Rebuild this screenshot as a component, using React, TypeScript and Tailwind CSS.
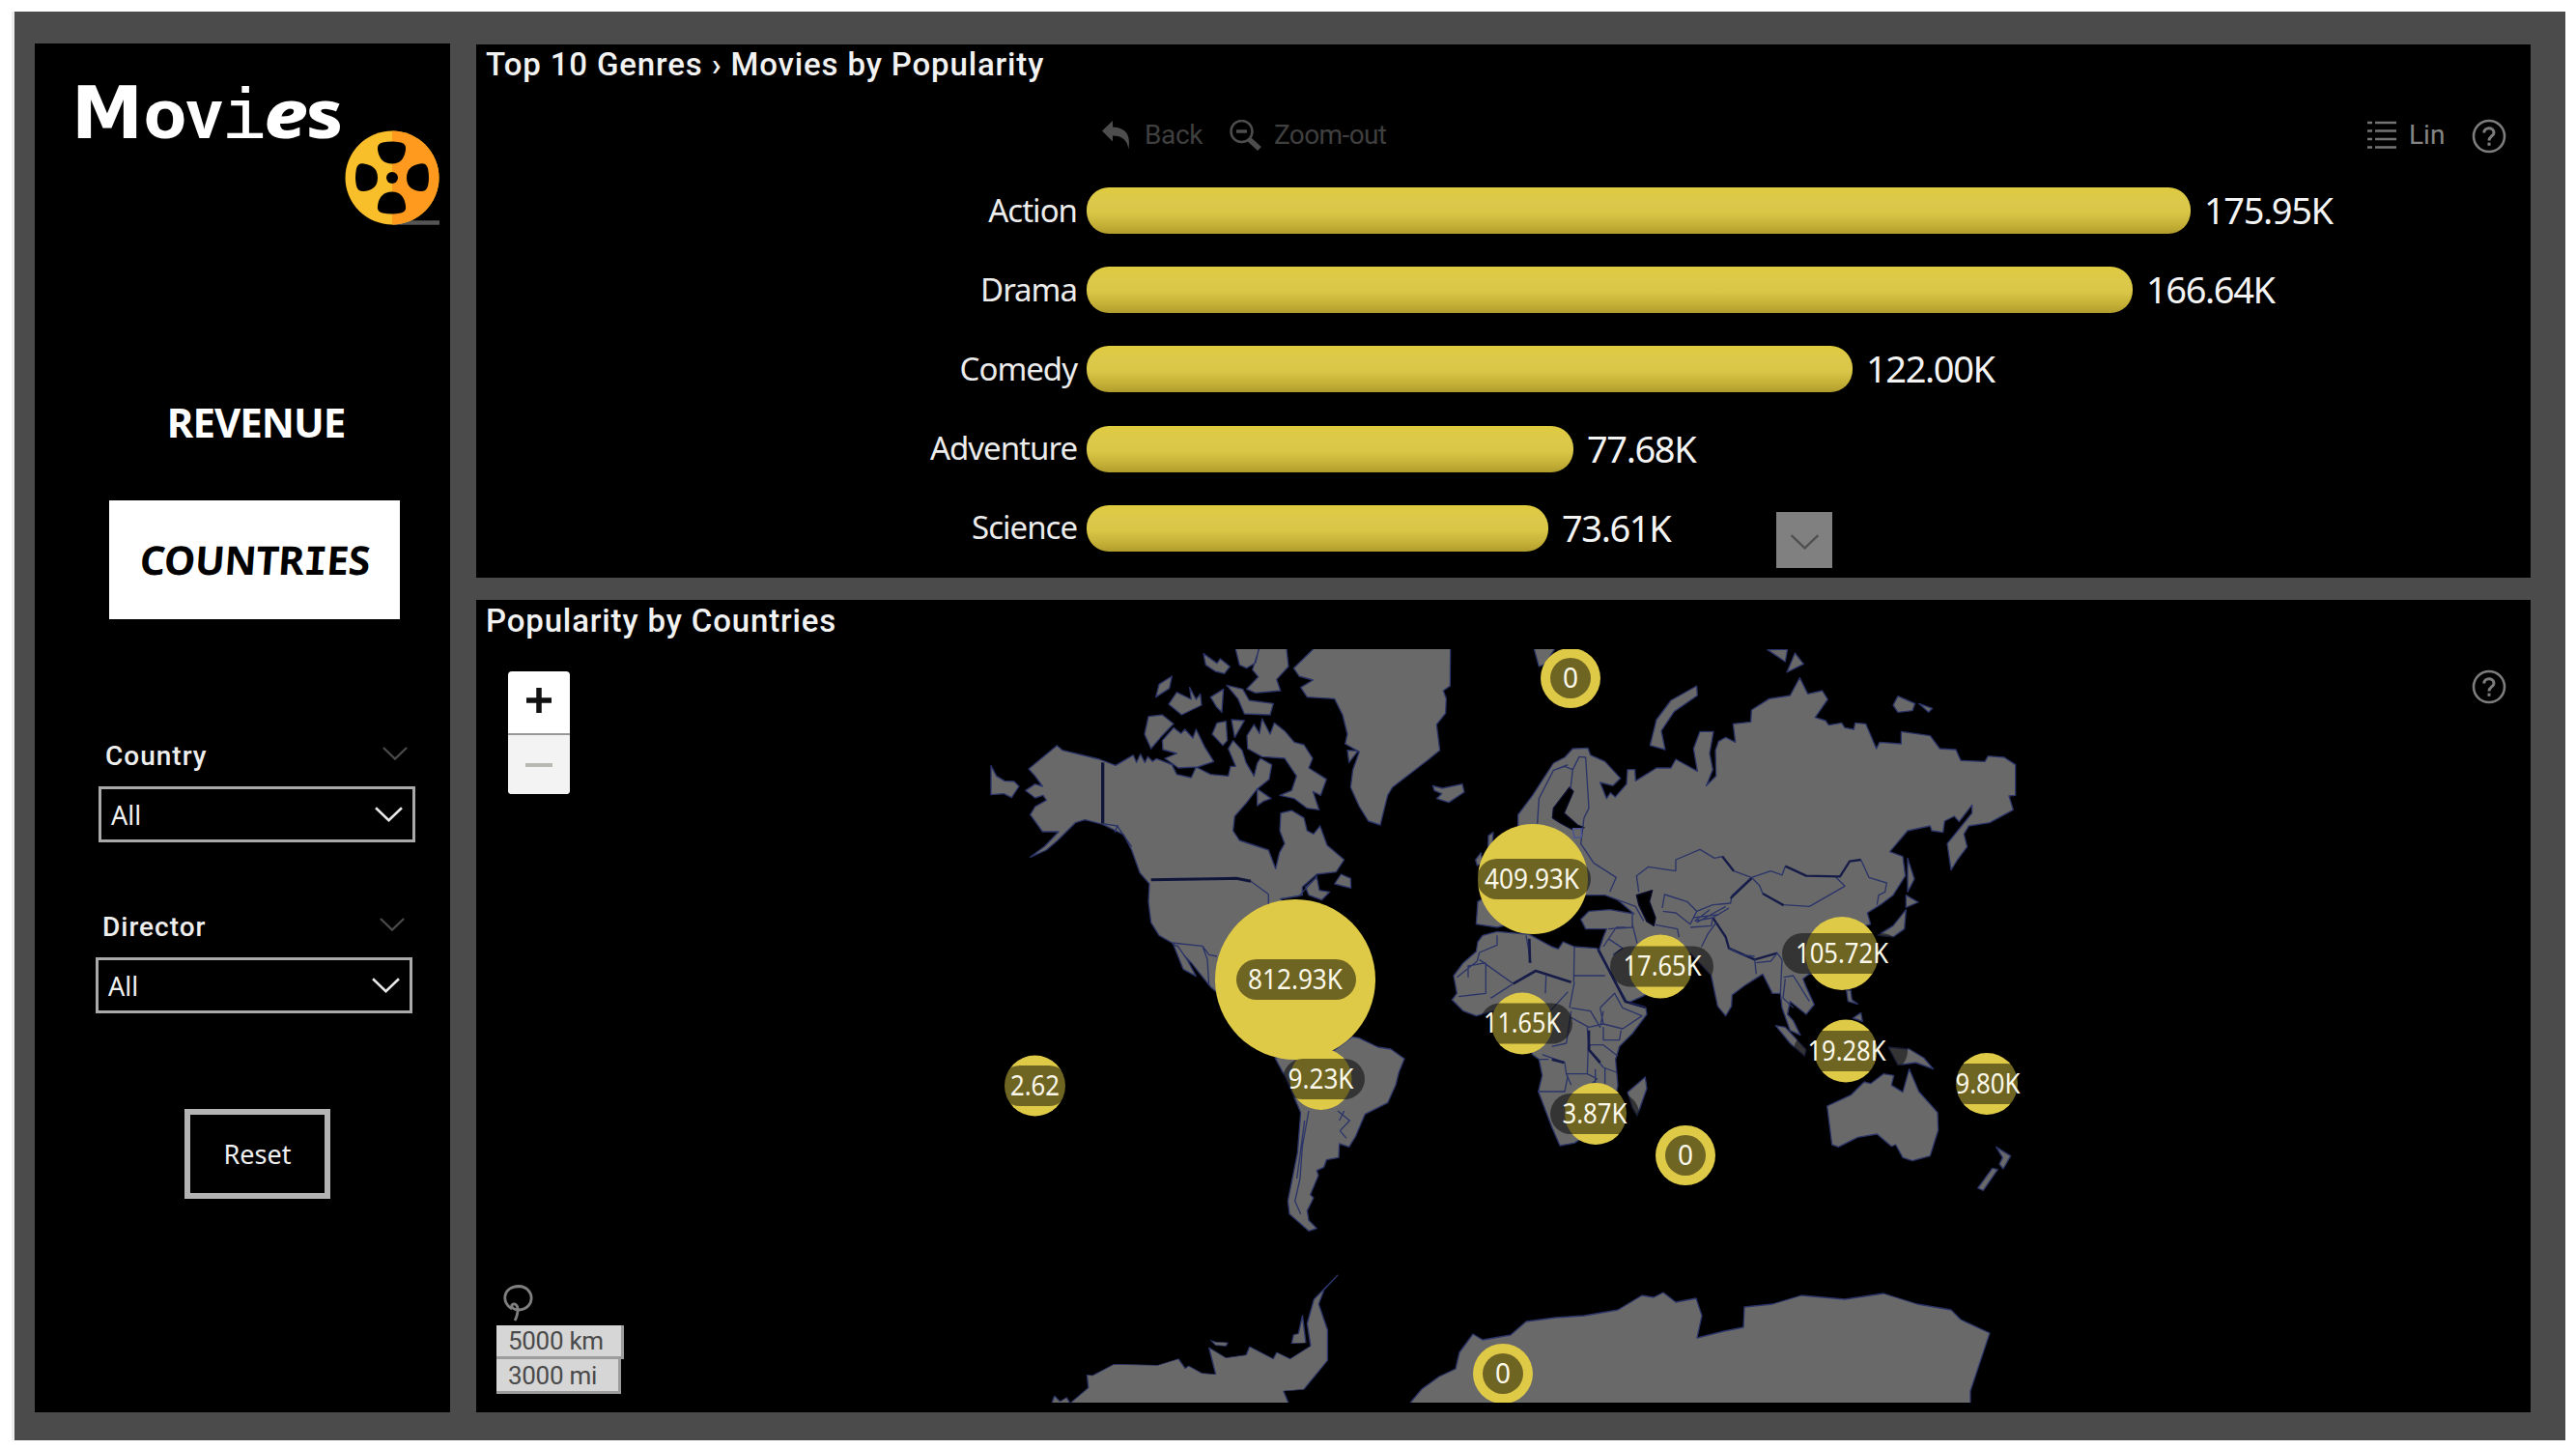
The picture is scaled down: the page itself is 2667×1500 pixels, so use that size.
import React from "react";

const DIN = "font-['Roboto','Liberation_Sans',sans-serif]";
const SEGOE = "font-['Noto_Sans','Open_Sans',sans-serif]";

const LAND = "#696969";
const EDGE = "#2b3468";

function Chevron({ className, width = 2.5 }: { className: string; width?: number }) {
  return (
    <svg viewBox="0 0 28 15" className={className} fill="none" stroke="currentColor" strokeWidth={width}>
      <path d="M1 1 L14 13.5 L27 1" />
    </svg>
  );
}

function HelpIcon() {
  return (
    <svg viewBox="0 0 36 36" className="block h-9 w-9" fill="none" stroke="#7d7d7d" strokeWidth="2.6">
      <circle cx="18" cy="18" r="16" />
      <path d="M12.8 14.5 C12.8 8.3 23 8.3 23 14.2 C23 18 18 18 18 22.6" strokeWidth="3" />
      <path d="M18 24.6 V27.8" strokeWidth="3" />
    </svg>
  );
}

function Reel() {
  return (
    <svg viewBox="0 0 100 98" className="block h-[98px] w-[100px]">
      <path d="M50 95.5 H99" stroke="#555" strokeWidth="4.5" />
      <circle cx="50" cy="49" r="48.5" fill="#f9bf2b" />
      <path d="M50 .5 A48.5 48.5 0 0 1 50 97.5Z" fill="#ff9a1e" />
      <g fill="#000">
        <path d="M35 20 Q34 14 40 12.500 Q50 10.500 59 12.500 Q65 14 64 20 Q62 34.500 50 34.500 Q37 34.500 35 20Z" />
        <path d="M35 78 Q34 84 40 85.500 Q50 87.500 59 85.500 Q65 84 64 78 Q62 63.500 50 63.500 Q37 63.500 35 78Z" />
        <path d="M21 34.500 Q14.500 33.500 13 39.500 Q11 49 13 57.500 Q14.500 63.500 21 63 Q35 61.500 35 49 Q35 36.500 21 34.500Z" />
        <path d="M79 34.500 Q85.500 33.500 87 39.500 Q89 49 87 57.500 Q85.500 63.500 79 63 Q65 61.500 65 49 Q65 36.500 79 34.500Z" />
        <circle cx="50" cy="49" r="6" />
      </g>
    </svg>
  );
}

function Logo() {
  return (
    <svg viewBox="0 0 300 120" className="block h-[120px] w-[300px]" fill="#fff">
      <text x="-5" y="98" fontFamily="DejaVu Sans" fontWeight="700" fontSize="75" textLength="74" lengthAdjust="spacingAndGlyphs">M</text>
      <text x="69" y="98" fontFamily="Noto Sans" fontWeight="700" fontSize="70" textLength="46" lengthAdjust="spacingAndGlyphs">o</text>
      <text x="114" y="98" fontFamily="Noto Sans" fontWeight="700" fontSize="70" textLength="37" lengthAdjust="spacingAndGlyphs">v</text>
      <text x="151" y="98" fontFamily="Liberation Mono" fontSize="74" textLength="46" lengthAdjust="spacingAndGlyphs">i</text>
      <text x="194" y="98" fontFamily="Noto Sans" fontWeight="800" fontStyle="italic" fontSize="70" textLength="46" lengthAdjust="spacingAndGlyphs">e</text>
      <text x="238" y="98" fontFamily="Noto Sans" fontWeight="800" fontSize="70" textLength="38" lengthAdjust="spacingAndGlyphs">s</text>
    </svg>
  );
}

function Slicer({ label, indent }: { label: string; indent: string }) {
  return (
    <div className={indent}>
      <div className={`flex h-6 w-[328px] items-center justify-between pl-[7px] pr-[8px] text-[28px] font-medium leading-none tracking-[1px] text-[#eee] ${DIN}`}>
        <span>{label}</span>
        <Chevron className="-mt-1.5 block h-[14px] w-[26px] text-[#4a4a4a]" />
      </div>
      <div className="mt-[19px] flex h-[58px] w-[328px] items-center justify-between border-[3px] border-[#a9a9a9] pl-[10px] pr-[10px]">
        <span className={`text-[27px] leading-none text-[#f0f0f0] ${SEGOE}`}>All</span>
        <Chevron className="block h-[16px] w-[29px] text-[#e8e8e8]" />
      </div>
    </div>
  );
}

const BARS = [
  { name: "Action", value: "175.95K", width: 1143 },
  { name: "Drama", value: "166.64K", width: 1083 },
  { name: "Comedy", value: "122.00K", width: 793 },
  { name: "Adventure", value: "77.68K", width: 504 },
  { name: "Science", value: "73.61K", width: 478 },
];

const BUBBLES = [
  { x: 1626, y: 702, r: 31, label: "0", px: 1605, pw: 42 },
  { x: 1341, y: 1014, r: 83, label: "812.93K", px: 1280, pw: 124 },
  { x: 1367.500, y: 1117, r: 32, label: "9.23K", px: 1328, pw: 85 },
  { x: 1587, y: 910, r: 57, label: "409.93K", px: 1529, pw: 118, tx: 1586 },
  { x: 1576, y: 1059.500, r: 32, label: "11.65K", px: 1532, pw: 96 },
  { x: 1719, y: 1000.500, r: 33, label: "17.65K", px: 1667, pw: 107, tx: 1721 },
  { x: 1652, y: 1153, r: 32, label: "3.87K", px: 1605, pw: 92, tx: 1651 },
  { x: 1745, y: 1196, r: 31, label: "0", px: 1724, pw: 42 },
  { x: 1556, y: 1422, r: 31, label: "0", px: 1535, pw: 42 },
  { x: 1907, y: 987, r: 38, label: "105.72K", px: 1845, pw: 124 },
  { x: 1911, y: 1088, r: 32.500, label: "19.28K", px: 1857, pw: 118, tx: 1912 },
  { x: 2057, y: 1122, r: 32, label: "9.80K", px: 2015, pw: 84, tx: 2058 },
  { x: 1071.500, y: 1124, r: 31.500, label: "2.62", px: 1035, pw: 72 },
];

const TEXT_WIDTH: Record<string, number> = { "0": 16, "2.62": 51, "9.23K": 68, "3.87K": 67, "9.80K": 67, "11.65K": 80, "17.65K": 81, "19.28K": 81, "409.93K": 98, "812.93K": 98, "105.72K": 96 };

function WorldMap() {
  return (
    <svg viewBox="1000 672 1140 780" className="absolute left-[507px] top-[51px] h-[780px] w-[1140px]">
      <g fill={LAND} stroke={EDGE} strokeWidth="1.3" strokeLinejoin="round">
        {/* North America */}
        <g transform="translate(1000 660) scale(.333333)" strokeWidth="4">
          <path d="M78 398 L95 430 120 445 150 447 165 462 142 497 118 485 78 488Z" />
          <path d="M195 408 L283 335 300 350 415 378 465 397 520 365 530 388 542 362 556 388 565 370 580 385 592 376 640 395 655 425 700 435 715 402 760 425 815 430 822 400 838 400 815 345 830 320 858 350 870 388 895 430 905 390 915 375 950 395 942 440 905 470 870 515 835 555 830 600 850 630 940 660 962 718 974 668 990 640 975 600 978 545 1012 537 1050 560 1060 600 1080 610 1100 585 1122 645 1175 690 1150 728 1090 735 1045 775 1045 800 980 812 1000 900 1000 1150 800 1120 760 1085 700 1010 640 948 600 925 575 885 567 820 570 765 540 730 515 660 490 612 425 580 370 566 340 575 285 630 250 660 200 682 245 648 288 603 238 603 200 550 215 525 250 505 240 490 215 498 185 475 215 455 238 462 215 430Z" />
          <path d="M645 955 L658 958 690 1005 715 1052 675 1030Z" />
          <path d="M1055 775 L1090 745 1098 785 1130 790 1105 815 1065 800Z M1145 765 L1165 735 1195 748 1196 778Z" />
          <path d="M590 185 L600 145 640 120 632 158Z M567 245 L610 240 645 268 605 310 575 345 555 300Z M630 207 L655 170 700 192 695 155 715 192 728 175 732 210 670 240Z" />
          <path d="M610 320 L645 280 668 298 680 285 705 312 715 285 742 340 770 385 720 402 660 405 618 375 655 360 612 348Z" />
          <path d="M760 185 L800 160 795 232 778 215Z M810 148 L860 160 880 195 955 205 945 240 865 237 845 190Z M765 300 L780 265 808 260 812 320 798 335Z M825 255 L865 258 835 310Z" />
          <path d="M835 25 L912 25 900 78 872 95 850 85Z M914 25 L995 25 1002 90 965 130 977 165 900 172 872 160 908 122 890 100Z M738 50 L780 80 790 66 820 90 803 112 775 105 745 85Z" />
          <path d="M873 305 L895 270 912 298 920 252 945 300 958 265 990 290 1020 325 1050 333 1077 375 1065 405 1120 440 1102 490 1078 478 1097 535 1060 530 1020 500 975 490 1012 475 1027 430 990 375 920 370 875 345Z" />
          <path d="M905 470 L948 500 925 508 905 522Z" />
          <path fill="none" stroke="#10153a" strokeWidth="10" d="M425 388 V578" />
          <path fill="none" stroke="#10153a" strokeWidth="9" d="M575 752 L840 748 885 757" />
          <path fill="none" d="M885 757 L940 797 940 840 M975 812 L1035 803 1092 740 M640 948 L735 958 755 985 780 990 M735 958 L750 1000 755 1080 M425 578 L470 585 515 650 M462 605 L472 582" />
        </g>
        {/* Greenland, Iceland, Svalbard */}
        <g transform="translate(1300 660) scale(.333333)" strokeWidth="4">
          <path d="M190 25 L605 25 604 150 583 165 592 190 590 235 562 270 572 350 535 380 425 465 410 490 387 582 350 570 322 525 295 465 302 410 322 355 278 330 285 300 270 240 245 190 160 185 140 155 178 132 135 120 118 95Z" />
          <path d="M285 350 L318 352 290 388Z M550 460 L580 468 642 455 648 480 600 512 562 500 578 485 555 475Z M862 25 L935 25 900 82 880 90Z" />
          <path d="M723 615 L738 605 735 650 722 655Z M683 690 L700 668 705 700 688 708Z" />
        </g>
        {/* Eurasia */}
        <g transform="translate(1640 660) scale(.333333)" strokeWidth="4">
          <path d="M-205 550 L-160 490 -95 390 -60 372 -35 345 12 343 20 365 65 385 113 437 90 460 50 450 70 500 82 482 97 495 132 455 135 410 158 410 160 445 225 405 270 405 285 378 352 415 340 345 360 292 402 292 390 360 400 410 380 460 410 430 408 350 418 322 440 310 470 325 463 268 518 262 520 225 575 190 640 180 670 125 695 175 740 165 757 192 718 248 750 258 760 272 800 265 810 280 838 285 842 265 875 268 908 345 918 325 985 330 985 292 1075 305 1105 345 1155 348 1170 382 1245 385 1255 368 1305 372 1340 395 1340 490 1320 492 1333 535 1260 575 1195 585 1180 610 1190 650 1160 690 1140 722 1128 640 1205 545 1205 520 1165 572 1150 555 1120 570 1115 605 1080 600 1075 585 1005 600 950 665 990 680 998 740 960 800 920 830 880 855 890 890 860 900 890 980 840 1040 700 1045 680 1060 690 1085 715 1140 690 1170 640 1130 632 1170 650 1190 672 1235 640 1220 615 1150 610 1105 585 1105 555 1045 500 1080 460 1110 458 1145 440 1175 415 1145 395 1050 330 980 290 1060 180 1115 135 1135 45 975 60 930 70 905 5 905 -10 875 15 850 80 845 155 858 105 815 65 800 -20 800 -40 860 -150 870 -270 900 -335 890 -330 820 -280 790 -300 700 -205 640Z" />
          <path fill="#000" stroke="#0a0d2c" d="M-45 465 L-33 478 -62 545 -20 582 0 590 -35 597 -75 575 -98 560 -95 530Z M163 800 L212 785 203 820 222 870 217 895 195 882 170 830Z" />
          <path d="M205 335 L225 255 270 195 350 150 352 180 280 230 240 290 252 348Z M570 38 L632 36 625 75Z M655 48 L682 82 630 108Z M960 210 L975 182 1028 205 1020 227 975 232Z M1040 205 L1082 220 1070 232Z" />
          <path d="M1005 685 L1026 750 1005 790Z M1000 800 L1038 822 1000 838Z M1000 845 L995 905 960 930 912 925 960 895Z" />
          <path fill="none" d="M285 725 L285 690 360 658 405 685 430 680 465 725 520 745 460 800 455 825 400 830 350 850 320 820 250 798 243 840 M285 725 L200 712 163 740 170 790 M520 745 L545 770 555 795 620 830 700 835 810 772 780 742 M520 745 L580 725 615 738 625 710 M860 690 L885 745 940 762 935 790 915 800 910 830" />
          <path fill="none" stroke="#161c48" strokeWidth="7" d="M625 710 L690 740 795 742 825 695 860 690 M430 680 L465 725 M520 748 L455 810 M555 795 L620 832 M400 870 L440 930 450 965 530 1000 600 980" />
          <path fill="none" d="M450 840 L400 870 345 880 390 845 M400 870 L395 895 330 900 M530 1000 L535 1045 M535 1010 L580 1005 600 980 615 1000 610 1105 M450 965 L490 985 530 990 M410 885 L385 920 365 960 M245 850 L285 855 330 890 350 850 M222 892 L290 905 295 930 M620 1055 L650 1050 700 1130 M625 1060 L618 1120 650 1150 M340 870 L420 860 M350 885 L440 835" />
          <path fill="none" d="M-145 578 L-140 500 -95 412 -60 400 -35 410 -15 370 5 372 15 530 0 560 -10 640 30 700 100 745 80 790 M-35 410 L-42 470 M-95 412 L-50 395 M105 815 L160 835 185 880 M150 860 L150 900 75 905 M150 890 L165 950 M60 960 L100 900 130 900 M75 935 L120 965 90 985" />
          <path d="M-35 593 L-8 593 -8 620 -30 622Z" stroke="#46529a" />
        </g>
        {/* Africa */}
        <g transform="translate(1460 900) scale(.333333)" strokeWidth="4">
          <path d="M225 205 L270 193 370 202 440 240 460 247 475 225 510 240 580 245 590 265 635 345 668 412 732 430 735 450 690 510 650 550 638 590 645 670 640 700 600 790 510 850 465 858 440 800 398 690 410 640 400 590 380 575 340 500 260 440 205 455 165 440 130 405 145 385 135 330 165 290 205 255 210 225Z" />
          <path d="M675 692 L730 645 735 680 705 765 690 740Z" />
          <path fill="none" d="M270 205 L270 235 215 258 208 285 145 335 M215 280 L320 355 M375 290 L360 205 M508 350 L510 240 M510 330 L605 330 M510 350 L495 430 M235 290 L235 385 150 395 M180 335 L180 300 235 290 M320 355 L250 400 M422 330 L420 385 M500 430 L560 440 590 490 600 440 M590 430 L635 385 660 430 720 455 660 495 600 480 590 430 M500 460 L555 490 600 480 M550 490 L555 560 600 615 640 630 M555 560 L560 545 600 545 645 580 M410 575 L480 600 485 635 550 635 580 650 560 670 M555 500 L550 635 M400 690 L480 690 490 640 M600 490 L600 530 650 530 655 500 M500 440 L485 540 440 550 M575 620 L575 670 M605 615 L605 665 M485 635 L500 670 M435 440 L490 380 M400 590 L430 590" />
          <path fill="none" stroke="#161c48" strokeWidth="8" d="M320 355 L390 315 500 350 M370 215 L372 290 M555 500 L555 560 590 600 M440 590 L478 600 M585 250 L668 410 730 428" />
        </g>
        {/* South America */}
        <g transform="translate(1200 960) scale(.333333)" strokeWidth="4">
          <path d="M360 405 L540 385 600 340 620 343 680 372 720 378 762 408 745 450 735 490 710 545 640 580 610 650 590 682 560 672 558 715 520 722 512 745 490 755 495 770 470 830 480 840 460 880 465 910 490 935 465 943 405 890 400 850 410 800 430 700 440 575 395 470Z" />
          <path fill="none" d="M465 570 L445 680 438 780 422 850 440 890 M452 600 L428 780 M555 570 L592 600 562 632 582 655 M560 600 L575 570" />
        </g>
        {/* South-east Asia and Oceania */}
        <g transform="translate(1640 940) scale(.333333)" strokeWidth="4">
          <path d="M595 365 L625 370 690 440 685 460 640 420Z M815 255 L828 255 832 285 850 298 820 290Z M835 342 L860 325 865 352Z M945 432 L1010 438 1055 465 1085 500 1030 480 975 488Z" />
          <path d="M755 615 L830 580 870 540 890 545 930 515 962 520 955 550 990 572 1010 500 1040 570 1098 635 1100 690 1075 770 1020 785 990 775 968 735 955 740 910 702 850 712 790 742 770 735Z" />
          <path d="M1280 742 L1325 770 1302 810 1290 795 1300 775Z M1268 808 L1285 812 1240 877 1223 870Z" />
        </g>
        {/* Antarctica */}
        <g transform="translate(480 1260) scale(.7015 .333333)" strokeWidth="2">
          <path d="M866 590 L872 555 880 572 890 560 895 578 922 530 920 490 928 492 960 457 1025 460 1055 440 1065 470 1070 462 1090 485 1110 488 1100 405 1125 437 1155 428 1160 402 1195 440 1200 420 1220 440 1250 400 1245 330 1255 255 1290 180 1270 225 1262 270 1275 350 1275 445 1240 535 1210 540 1220 590Z" />
          <path d="M1222 392 L1225 365 1232 362 1238 305 1243 390Z M1103 383 L1110 388 1128 390 1125 400 1110 398Z" />
        </g>
        <path d="M1455 1460 L1461 1451 1472 1438 1490 1425 1507 1417 1511 1400 1525 1381 1535 1387 1564 1382 1580 1368 1610 1364 1640 1362 1675 1356 1700 1341 1712 1343 1722 1338 1735 1348 1756 1344 1762 1362 1757 1385 1785 1378 1805 1374 1806 1353 1835 1350 1865 1341 1910 1345 1950 1339 1985 1350 2020 1356 2030 1366 2060 1380 2040 1440 2040 1460Z" />
      </g>
      {BUBBLES.map((b, i) => {
        const w = TEXT_WIDTH[b.label];
        return (
          <g key={i}>
            <circle cx={b.x} cy={b.y} r={b.r} fill="#dfca47" />
            <rect x={b.px} y={b.y - 21} width={b.pw} height="42" rx="21" fill="#000" fillOpacity=".5" />
            <text x={(b.tx ?? b.x) - w / 2} y={b.y + 9.5} textLength={w} lengthAdjust="spacingAndGlyphs" fontFamily="Noto Sans" fontSize="29" fill="#fbf8ea">
              {b.label}
            </text>
          </g>
        );
      })}
    </svg>
  );
}

function Sidebar() {
  return (
    <aside className="flex h-[1417px] w-[430px] shrink-0 flex-col bg-black">
      <div className="relative h-[247px] pl-[43px]">
        <Logo />
        <div className="absolute left-[320px] top-[90px]">
          <Reel />
        </div>
      </div>
      <div className="mt-[127px] flex h-9 w-[458px] items-center justify-center">
        <span className="font-['Noto_Sans',sans-serif] text-[42px] font-bold leading-none tracking-[-1px] text-white">REVENUE</span>
      </div>
      <div className="ml-[77px] mt-[63px] flex h-[123px] w-[301px] items-center justify-center bg-white">
        <span className="skew-x-[-4deg] whitespace-nowrap font-['Noto_Sans',sans-serif] text-[41px] font-bold leading-none tracking-[-0.5px] text-black">
          COUNTR<span className="font-['DejaVu_Sans_Mono',monospace] text-[40px]">I</span>ES
        </span>
      </div>
      <Slicer label="Country" indent="ml-[66px] mt-[130px]" />
      <Slicer label="Director" indent="ml-[63px] mt-[76px]" />
      <button className={`ml-[155px] mt-[99px] h-[93px] w-[151px] border-[6px] border-[#b3b3b3] text-[27px] leading-none text-[#f0f0f0] ${SEGOE}`}>
        Reset
      </button>
    </aside>
  );
}

function GenresPanel() {
  return (
    <section className="relative h-[552px] bg-black">
      <h2 className={`pl-[10px] pt-[3px] text-[33px] font-medium leading-[36px] tracking-[0.85px] text-[#f2f2f2] ${DIN}`}>Top 10 Genres › Movies by Popularity</h2>
      <div className={`mt-[37px] flex h-9 items-center text-[28px] leading-none ${DIN}`}>
        <svg viewBox="0 0 30 30" className="ml-[648px] h-[30px] w-[30px]" fill="#4d4d4d">
          <path d="M0 10.500 L11 0 V6.500 C24 7 30 14 27.500 29.500 C26 20 21 15.500 11 15.500 V21.500Z" />
        </svg>
        <span className="ml-[14px] tracking-[-0.4px] text-[#3f3f3f]">Back</span>
        <svg viewBox="0 0 34 32" className="ml-[28px] h-8 w-[34px]" fill="none" stroke="#4d4d4d">
          <circle cx="12.500" cy="12" r="11" strokeWidth="2.500" />
          <path d="M7 12 H18" strokeWidth="3.500" />
          <path d="M20 20 L31 30" strokeWidth="5.500" />
        </svg>
        <span className="ml-[12px] tracking-[-0.6px] text-[#3f3f3f]">Zoom-out</span>
        <svg viewBox="0 0 30 30" className="ml-auto h-[30px] w-[30px]" stroke="#747474" strokeWidth="2.600">
          <path d="M0 2 H5 M8 2 H30 M0 10.500 H5 M8 10.500 H30 M0 19 H5 M8 19 H30 M0 27.500 H5 M8 27.500 H30" />
        </svg>
        <span className="ml-[13px] w-[65px] text-[#858585]">Lin</span>
        <div className="mr-[25px] mt-[2px]">
          <HelpIcon />
        </div>
      </div>
      <div className="mt-[36px] flex flex-col gap-[34.2px]">
        {BARS.map((b) => (
          <div key={b.name} className={`flex h-12 items-center leading-none ${SEGOE}`}>
            <span className="-mt-0.5 w-[622px] text-right text-[33px] tracking-[-1px] text-[#ececec]">{b.name}</span>
            <div className="ml-[10px] h-12 shrink-0 rounded-[23px] bg-[linear-gradient(180deg,#dfcb3f_0%,#dcc84a_30%,#d9c546_55%,#c4b036_82%,#b09c2c_100%)]" style={{ width: b.width }} />
            <span className="-mt-0.5 ml-[14px] text-[38px] tracking-[-1.4px] text-[#f4f4f4]">{b.value}</span>
          </div>
        ))}
      </div>
      <div className="absolute left-[1346px] top-[484px] flex h-[58px] w-[58px] items-center justify-center bg-[#808080]">
        <Chevron className="mt-1 block h-[16px] w-[33px] text-[#505050]" width={2.2} />
      </div>
    </section>
  );
}

function CountriesPanel() {
  return (
    <section className="relative mt-[23px] flex h-[841px] flex-col overflow-hidden bg-black">
      <WorldMap />
      <h2 className={`pl-[10px] pt-[4px] text-[33px] font-medium leading-[36px] tracking-[0.85px] text-[#f2f2f2] ${DIN}`}>Popularity by Countries</h2>
      <div className="flex items-start justify-between pl-[33px] pr-[25px] pt-[32px]">
        <div className="mt-[2px] w-16 overflow-hidden rounded-[4px] bg-white">
          <div className="flex h-[66px] items-center justify-center border-b-2 border-[#999]">
            <svg viewBox="0 0 26 26" className="-mt-1 h-[26px] w-[26px]" stroke="#111" strokeWidth="5.500">
              <path d="M0 13 H26 M13 0 V26" />
            </svg>
          </div>
          <div className="flex h-[61px] items-center justify-center bg-[#f3f3f3]">
            <svg viewBox="0 0 28 6" className="h-[6px] w-[28px]" stroke="#b9b9b4" strokeWidth="4">
              <path d="M0 3 H28" />
            </svg>
          </div>
        </div>
        <HelpIcon />
      </div>
      <div className="mb-[19px] ml-[21px] mt-auto">
        <svg viewBox="0 0 32 38" className="mb-[4px] ml-[7px] block h-[38px] w-[32px]" fill="none" stroke="#7f7f7f" strokeWidth="2.800">
          <path d="M9 25 C-2 19 -1 2 16 1.500 C33 2 34 25 16 26 C12 26 8 24 9 21 C11 18 16 21 15 27 C14.500 31 14 34 12 37" />
        </svg>
        <div className={`text-[26px] leading-none tracking-[-0.3px] text-[#4a4a4a] ${DIN}`}>
          <div className="flex h-[35px] w-[132px] items-center border-b-[3px] border-r-[3px] border-[#9c9c9c] bg-[#d6d6d6] pl-[12px]">5000 km</div>
          <div className="flex h-[36px] w-[129px] items-center border-b-[3px] border-r-[3px] border-[#9c9c9c] bg-[#d6d6d6] pl-[12px]">3000 mi</div>
        </div>
      </div>
    </section>
  );
}

export default function App() {
  return (
    <div className="h-[1500px] w-[2667px] overflow-hidden bg-white pl-3 pt-3">
      <div className="flex h-[1479px] w-[2644px] border-l-[3px] border-[#ececec] bg-[#4b4b4b] pl-[21px] pt-[33px]">
        <Sidebar />
        <main className="ml-[27px] mt-px w-[2127px]">
          <GenresPanel />
          <CountriesPanel />
        </main>
      </div>
    </div>
  );
}
